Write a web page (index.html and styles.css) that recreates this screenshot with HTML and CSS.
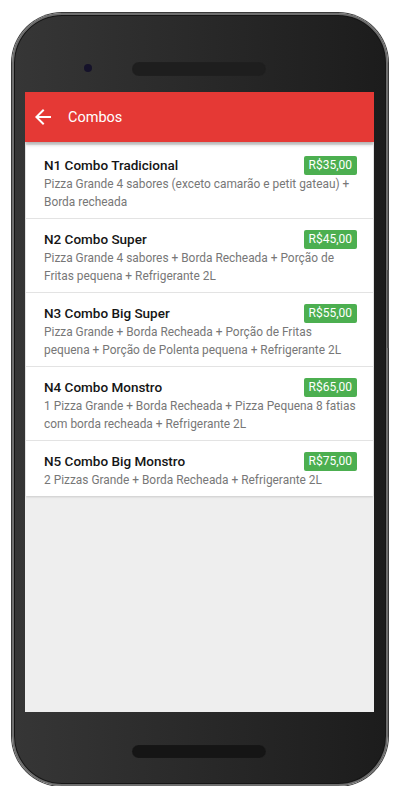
FILE: index.html
```html
<!DOCTYPE html>
<html lang="pt-BR">
<head>
    <meta charset="UTF-8">
    <meta name="viewport" content="width=device-width, initial-scale=1.0">
    <title>Combos</title>
    <link rel="stylesheet" href="styles.css">
</head>
<body>
    <div class="phone">
        <div class="side-btn"></div>
        <div class="phone-top">
            <div class="camera"></div>
            <div class="speaker"></div>
        </div>

        <div class="screen">
            <div class="toolbar">
                <svg class="back" viewBox="0 0 24 24" width="24" height="24">
                    <path fill="#fff" d="M20 11H7.83l5.59-5.59L12 4l-8 8 8 8 1.41-1.41L7.83 13H20v-2z"/>
                </svg>
                <span class="title">Combos</span>
            </div>

            <div class="list">
                <div class="item">
                    <div class="item-head">
                        <span class="item-name">N1 Combo Tradicional</span>
                        <span class="price">R$35,00</span>
                    </div>
                    <div class="item-desc">Pizza Grande 4 sabores (exceto camarão e petit gateau) + Borda recheada</div>
                </div>
                <div class="item">
                    <div class="item-head">
                        <span class="item-name">N2 Combo Super</span>
                        <span class="price">R$45,00</span>
                    </div>
                    <div class="item-desc">Pizza Grande 4 sabores + Borda Recheada + Porção de Fritas pequena + Refrigerante 2L</div>
                </div>
                <div class="item">
                    <div class="item-head">
                        <span class="item-name">N3 Combo Big Super</span>
                        <span class="price">R$55,00</span>
                    </div>
                    <div class="item-desc">Pizza Grande + Borda Recheada + Porção de Fritas pequena + Porção de Polenta pequena + Refrigerante 2L</div>
                </div>
                <div class="item">
                    <div class="item-head">
                        <span class="item-name">N4 Combo Monstro</span>
                        <span class="price">R$65,00</span>
                    </div>
                    <div class="item-desc">1 Pizza Grande + Borda Recheada + Pizza Pequena 8 fatias com borda recheada + Refrigerante 2L</div>
                </div>
                <div class="item">
                    <div class="item-head">
                        <span class="item-name">N5 Combo Big Monstro</span>
                        <span class="price">R$75,00</span>
                    </div>
                    <div class="item-desc">2 Pizzas Grande + Borda Recheada + Refrigerante 2L</div>
                </div>
            </div>
        </div>

        <div class="phone-bottom">
            <div class="speaker"></div>
        </div>
    </div>
</body>
</html>
```

FILE: styles.css
```css
body {
    margin: 0;
    background-color: #fff;
    font-family: Roboto, "Noto Sans", Arial, sans-serif;
}

.phone {
    position: relative;
    box-sizing: border-box;
    width: 376px;
    height: 773px;
    margin: 13px 0 0 12px;
    border: 2px solid #6e6e6e;
    border-radius: 50px;
    background: linear-gradient(to right, #363636, #1c1c1c);
    box-shadow: 0 0 0 1px #3a3a3a, inset 0 0 0 1px #151515;
    display: flex;
    flex-direction: column;
}

.side-btn {
    position: absolute;
    right: -3px;
    top: 255px;
    width: 2px;
    height: 78px;
    background-color: #4e4e4e;
}

.phone-top {
    height: 77px;
    box-sizing: border-box;
    padding: 31px 0 0 70px;
    display: flex;
    align-items: center;
    align-self: flex-start;
}

.camera {
    width: 8px;
    height: 8px;
    border-radius: 50%;
    background-color: #15122a;
    margin-top: -2px;
}

.speaker {
    width: 134px;
    height: 14px;
    border-radius: 7px;
    background-color: #1e1e1e;
    box-shadow: inset 0 0 1px #2a2a2a;
}

.phone-top .speaker {
    margin-left: 40px;
}

.phone-bottom {
    height: 72px;
    box-sizing: border-box;
    padding: 33px 0 0 118px;
}

.phone-bottom .speaker {
    height: 13px;
    background-color: #151515;
}

.screen {
    height: 620px;
    margin: 0 12px 0 11px;
    background-color: #eeeeee;
    overflow: hidden;
}

.toolbar {
    height: 50px;
    background-color: #e53935;
    display: flex;
    align-items: center;
    padding-left: 6px;
    box-shadow: 0 2px 4px rgba(0,0,0,0.3);
    position: relative;
}

.back {
    margin-right: 13px;
}

.title {
    color: #fff;
    font-size: 14.5px;
}

.list {
    margin: 3px 1px 0 1px;
    background-color: #fff;
    box-shadow: 0 1px 2px rgba(0,0,0,0.15);
}

.item {
    padding: 10px 16px 7px 18px;
    border-bottom: 1px solid #e3e3e3;
}

.item:last-child {
    border-bottom: none;
}

.item-head {
    display: flex;
    justify-content: space-between;
    align-items: center;
    height: 20px;
}

.item-name {
    font-size: 13.5px;
    font-weight: 500;
    color: #151515;
}

.price {
    background-color: #4caf50;
    color: #fff;
    font-size: 12px;
    line-height: 19px;
    padding: 0 5px;
    border-radius: 2px;
}

.item-desc {
    font-size: 11.9px;
    line-height: 18px;
    color: #777;
}
```
